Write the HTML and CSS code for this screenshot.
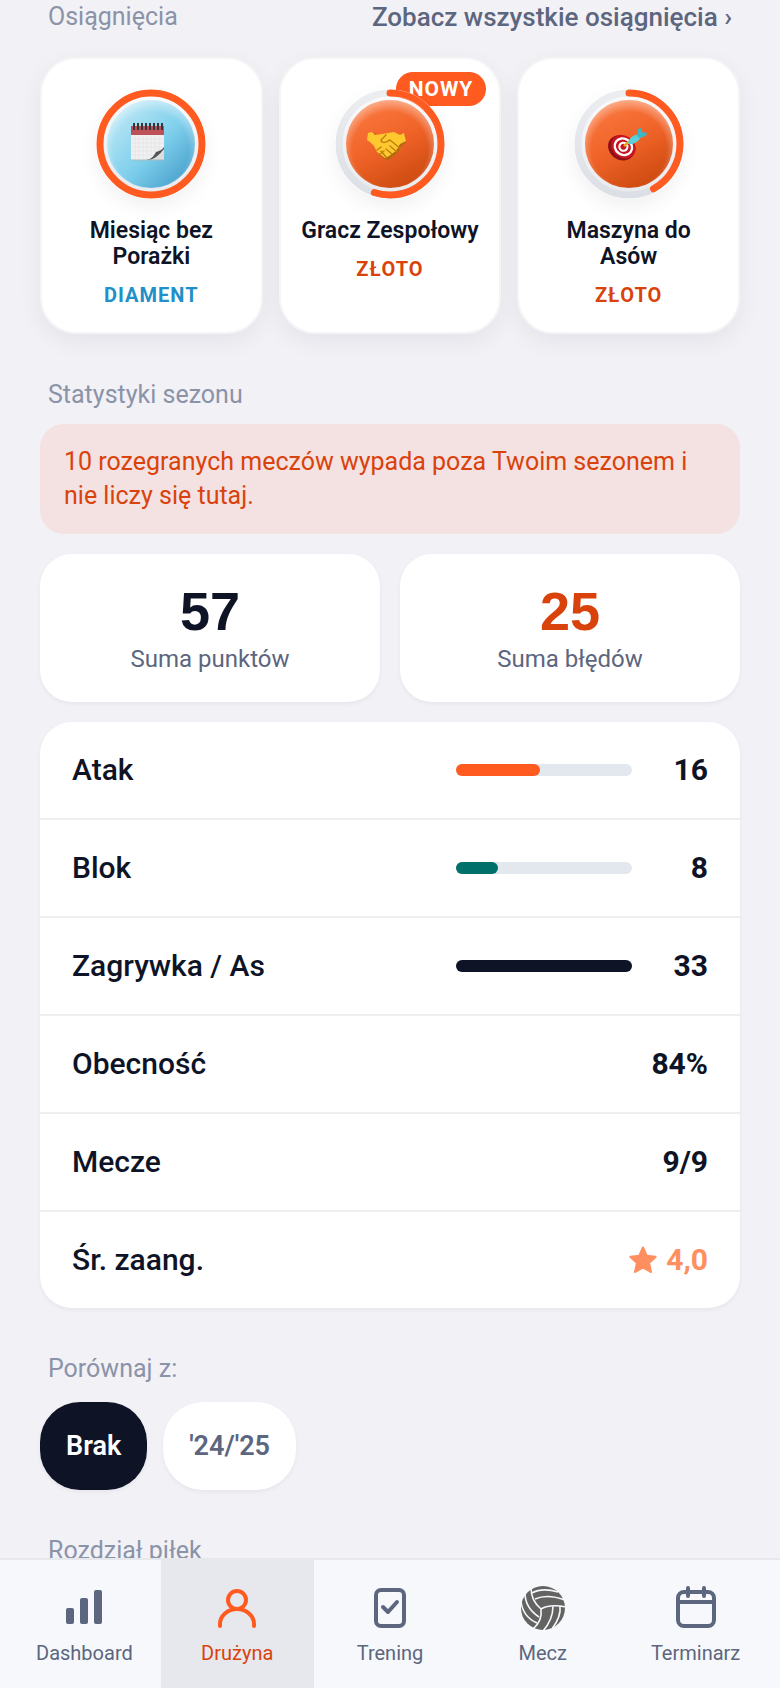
FILE: index.html
```
<!DOCTYPE html>
<html lang="pl">
<head>
    <meta charset="UTF-8">
    <meta name="viewport" content="width=device-width, initial-scale=1.0">
    <title>Drużyna</title>
    <link rel="stylesheet" href="styles.css">
</head>
<body>
    <main class="content">
        <!-- Achievements -->
        <div class="section-head">
            <h2 class="section-title">Osiągnięcia</h2>
            <a class="see-all" href="#">Zobacz wszystkie osiągnięcia ›</a>
        </div>
        <div class="achievements">
            <article class="achievement">
                <svg class="medal" viewBox="0 0 110 110" aria-hidden="true">
                    <defs>
                        <linearGradient id="diamond" x1="0" y1="0" x2="1" y2="1">
                            <stop offset="0" stop-color="#d9f1f9"/>
                            <stop offset="0.2" stop-color="#b0e3f3"/>
                            <stop offset="0.55" stop-color="#7ecfec"/>
                            <stop offset="1" stop-color="#3a93c2"/>
                        </linearGradient>
                        <linearGradient id="gold" x1="0.2" y1="0" x2="0.7" y2="1">
                            <stop offset="0" stop-color="#fb7a42"/>
                            <stop offset="0.5" stop-color="#f06328"/>
                            <stop offset="1" stop-color="#cc4a10"/>
                        </linearGradient>
                        <radialGradient id="shine" cx="0.5" cy="0.56" r="0.56">
                            <stop offset="0.76" stop-color="#fff" stop-opacity="0"/>
                            <stop offset="1" stop-color="#fff" stop-opacity="0.4"/>
                        </radialGradient>
                        <linearGradient id="track" x1="0" y1="0" x2="0" y2="1">
                            <stop offset="0" stop-color="#ebedf1"/>
                            <stop offset="1" stop-color="#dcdfe5"/>
                        </linearGradient>
                        <linearGradient id="rim" x1="0" y1="0" x2="0" y2="1">
                            <stop offset="0" stop-color="#fafafb"/>
                            <stop offset="1" stop-color="#e9eaee"/>
                        </linearGradient>
                    </defs>
                    <circle cx="55" cy="55" r="51" fill="url(#rim)" stroke="#ff5a1f" stroke-width="7"/>
                    <circle cx="55" cy="55" r="44" fill="url(#diamond)"/>
                    <circle cx="55" cy="55" r="44" fill="url(#shine)"/>
                    <g>
                        <path d="M35 39h33v32H35z" fill="#f1f1f2"/>
                        <path d="M35 37h33v9H35z" fill="#bd5158"/>
                        <path d="M39 46v25M43 46v25M47 46v25M51 46v25M55 46v25M59 46v20M63 46v16M35 50h33M35 54h33M35 58h33M35 62h28M35 66h24" stroke="#e6e6e9" stroke-width="1"/>
                        <path d="M50 71c7-1 8-5 10-8 3-1 6-2 8-5v4c-4 3-8 8-12 9z" fill="#555"/>
                        <path d="M53 71c6-1 11-6 15-11v11z" fill="#dedede"/>
                        <path d="M38 34v7M42 34v7M46 34v7M50 34v7M54 34v7M58 34v7M62 34v7M66 34v7" stroke="#3c3337" stroke-width="2"/>
                        <path d="M35 71h33" stroke="#a9b7bf" stroke-width="1"/>
                    </g>
                </svg>
                <h3 class="achievement-name">Miesiąc bez Porażki</h3>
                <p class="tier tier-diamond">Diament</p>
            </article>
            <article class="achievement">
                <span class="badge">Nowy</span>
                <svg class="medal" viewBox="0 0 110 110" aria-hidden="true">
                    <circle cx="55" cy="55" r="51" fill="url(#rim)" stroke="url(#track)" stroke-width="7"/>
                    <circle cx="55" cy="55" r="51" fill="none" stroke="#ff5a1f" stroke-width="7" stroke-linecap="round" pathLength="100" stroke-dasharray="55 100" transform="rotate(-90 55 55)"/>
                    <path d="M64 1a55 55 0 0 1 31 17M64 8a48 48 0 0 1 25 13" fill="none" stroke="#ff9a70" stroke-width="0.6"/>
                    <circle cx="55" cy="55" r="44" fill="url(#gold)"/>
                    <circle cx="55" cy="55" r="44" fill="url(#shine)"/>
                    <g stroke-linejoin="round" stroke-linecap="round">
                        <path d="M34 44l5-1 3 3 6-1 6 1 5-3 6 4 3-3 2 1 1 8-5 3-3 6-3 3-3 2-4 3-3-1-4-3-4-4-1-4-3-4-3-3z" fill="#b36a0c" transform="translate(0 1)"/>
                        <path d="M33 44l4-1 3 3 7-1 6-1 6-1 6 3 4-2 2 8-6 3-4 7-3 2-4 3-4 2-4-3-4-3-3-6-4-4-3-2z" fill="#fdc92f"/>
                        <path d="M51 46l-5 5c0 3 4 3 7 1l2-1 11 9M55 57l7 6M51 60l6 5M46 62l5 6M42 61l4-3M45 65l4-3" fill="none" stroke="#c27c10" stroke-width="1.4"/>
                    </g>
                </svg>
                <h3 class="achievement-name">Gracz Zespołowy</h3>
                <p class="tier tier-gold">Złoto</p>
            </article>
            <article class="achievement">
                <svg class="medal" viewBox="0 0 110 110" aria-hidden="true">
                    <circle cx="55" cy="55" r="51" fill="url(#rim)" stroke="url(#track)" stroke-width="7"/>
                    <circle cx="55" cy="55" r="51" fill="none" stroke="#ff5a1f" stroke-width="7" stroke-linecap="round" pathLength="100" stroke-dasharray="42 100" transform="rotate(-90 55 55)"/>
                    <circle cx="55" cy="55" r="44" fill="url(#gold)"/>
                    <circle cx="55" cy="55" r="44" fill="url(#shine)"/>
                    <g transform="rotate(35 48 58)">
                        <ellipse cx="48" cy="59" rx="14" ry="12" fill="#8d1018"/>
                        <ellipse cx="49" cy="57" rx="13" ry="11" fill="#c9141f"/>
                        <ellipse cx="49" cy="57" rx="9" ry="8" fill="none" stroke="#fff" stroke-width="2.4"/>
                        <ellipse cx="49" cy="57" rx="4" ry="4" fill="#c9141f" stroke="#fff" stroke-width="2.2"/>
                    </g>
                    <path d="M50 57l6-5" stroke="#e5a820" stroke-width="2.6"/>
                    <path d="M54 54c1-5 5-8 11-9l2 3c-3 5-8 8-12 7z" fill="#5ad0da"/>
                    <path d="M63 47l1-7 3-1 1 4 5 1-1 3-7 2z" fill="#3fb6c4"/>
                </svg>
                <h3 class="achievement-name">Maszyna do Asów</h3>
                <p class="tier tier-gold">Złoto</p>
            </article>
        </div>

        <!-- Season statistics -->
        <h2 class="section-title">Statystyki sezonu</h2>
        <p class="notice">10 rozegranych meczów wypada poza Twoim sezonem i nie liczy się tutaj.</p>
        <div class="totals">
            <div class="total">
                <strong class="total-value">57</strong>
                <span class="total-label">Suma punktów</span>
            </div>
            <div class="total">
                <strong class="total-value total-errors">25</strong>
                <span class="total-label">Suma błędów</span>
            </div>
        </div>
        <dl class="stats">
            <div class="stat">
                <dt>Atak</dt>
                <dd><span class="bar"><span class="bar-fill attack" style="width: 48%"></span></span><span class="count">16</span></dd>
            </div>
            <div class="stat">
                <dt>Blok</dt>
                <dd><span class="bar"><span class="bar-fill block" style="width: 24%"></span></span><span class="count">8</span></dd>
            </div>
            <div class="stat">
                <dt>Zagrywka / As</dt>
                <dd><span class="bar"><span class="bar-fill serve" style="width: 100%"></span></span><span class="count">33</span></dd>
            </div>
            <div class="stat">
                <dt>Obecność</dt>
                <dd>84%</dd>
            </div>
            <div class="stat">
                <dt>Mecze</dt>
                <dd>9/9</dd>
            </div>
            <div class="stat">
                <dt>Śr. zaang.</dt>
                <dd class="rating">
                    <svg class="star" viewBox="0 0 28 28" aria-hidden="true"><path d="M14 2.500l3.400 7.700 8.200.9-6.100 5.600 1.800 8.300-7.300-4.300-7.300 4.300 1.800-8.300-6.100-5.600 8.200-.9z" fill="currentColor" stroke="currentColor" stroke-width="2.200" stroke-linejoin="round"/></svg>
                    4,0
                </dd>
            </div>
        </dl>

        <!-- Season comparison -->
        <h2 class="section-title">Porównaj z:</h2>
        <div class="seasons">
            <button class="pill pill-active" type="button">Brak</button>
            <button class="pill" type="button">'24/'25</button>
        </div>
        <h2 class="section-title">Rozdział piłek</h2>
    </main>

    <nav class="tabbar">
        <a class="tab" href="#">
            <svg class="tab-icon" viewBox="0 0 48 48" fill="currentColor" aria-hidden="true"><rect x="6" y="24" width="8" height="16" rx="2"/><rect x="20" y="14" width="8" height="26" rx="2"/><rect x="34" y="6" width="8" height="34" rx="2"/></svg>
            Dashboard
        </a>
        <a class="tab tab-active" href="#" aria-current="page">
            <svg class="tab-icon" viewBox="0 0 48 48" fill="none" stroke="currentColor" stroke-width="4" stroke-linecap="round" aria-hidden="true"><circle cx="24" cy="16" r="9"/><path d="M7 42v-2a17 15 0 0 1 34 0v2"/></svg>
            Drużyna
        </a>
        <a class="tab" href="#">
            <svg class="tab-icon" viewBox="0 0 48 48" fill="none" stroke="currentColor" stroke-width="4" stroke-linecap="round" stroke-linejoin="round" aria-hidden="true"><rect x="10" y="6" width="28" height="36" rx="5"/><path d="M17 23l5 5 9-10"/></svg>
            Trening
        </a>
        <a class="tab" href="#">
            <svg class="tab-icon" viewBox="0 0 48 48" fill="none" stroke="#f6f8fc" stroke-width="1.600" aria-hidden="true"><circle cx="24" cy="24" r="22" fill="#636462" stroke="none"/><path d="M22 25C16 20 12 13 12 4M22 25c7-4 15-4 25-2M22 25c1 8-2 15-8 20M6 9c0 9 5 18 14 24M2 17c1 10 7 18 16 22M13 9c7-4 16-4 26-1M16 15c9-4 19-3 30 1M34 22c0 9-3 17-10 25M41 22c1 8-2 15-8 23"/></svg>
            Mecz
        </a>
        <a class="tab" href="#">
            <svg class="tab-icon" viewBox="0 0 48 48" fill="none" stroke="currentColor" stroke-width="4" stroke-linecap="round" aria-hidden="true"><rect x="6" y="8" width="36" height="34" rx="6"/><path d="M6 18h36M16 4v8M32 4v8"/></svg>
            Terminarz
        </a>
    </nav>
</body>
</html>
```

FILE: styles.css
```
* {
    box-sizing: border-box;
}
body {
    margin: 0;
    height: 100vh;
    display: flex;
    flex-direction: column;
    background: #f2f1f6;
    color: #0e1326;
    font-family: Roboto, "Liberation Sans", sans-serif;
    font-size: 25px;
}
h2, h3, p, dl, dd {
    margin: 0;
}
a {
    text-decoration: none;
}
.content {
    flex: 1;
    min-height: 0;
    overflow-y: auto;
    scrollbar-width: none;
    padding: 0 40px;
}
.section-head {
    display: flex;
    justify-content: space-between;
    padding-right: 8px;
}
.section-title, .see-all {
    line-height: 34px;
}
.section-title {
    padding-left: 8px;
    font-size: 25px;
    font-weight: 400;
    color: #8a93a8;
}
.see-all {
    font-size: 26px;
    font-weight: 500;
    color: #5c667e;
}

/* achievements */
.achievements {
    display: grid;
    grid-template-columns: repeat(3, 1fr);
    gap: 16px;
    margin: 23px 0 44px;
}
.achievement {
    position: relative;
    padding: 30px 16px 24px;
    border: 2px solid #f5f5f6;
    border-radius: 36px;
    background: #fff;
    box-shadow: 0 8px 24px rgba(14, 19, 38, 0.06);
    text-align: center;
}
.medal {
    display: block;
    width: 110px;
    height: 110px;
    margin: 0 auto 19px;
    position: relative;
    border-radius: 50%;
    box-shadow: 0 8px 20px rgba(14, 19, 38, 0.06);
}
.badge {
    position: absolute;
    top: 13px;
    right: 13px;
    padding: 0 13px;
    border-radius: 17px;
    background: #ff5a1f;
    color: #fff;
    font-size: 21px;
    font-weight: 700;
    line-height: 34px;
    letter-spacing: 1px;
    text-transform: uppercase;
}
.achievement-name {
    font-size: 23px;
    font-weight: 600;
    line-height: 26px;
}
.tier {
    margin-top: 12px;
    font-size: 20px;
    font-weight: 700;
    line-height: 26px;
    letter-spacing: 1px;
    text-transform: uppercase;
}
.tier-diamond {
    color: #2190c8;
}
.tier-gold {
    color: #d9430b;
}

/* season statistics */
.notice {
    margin: 12px 0 20px;
    padding: 21px 24px;
    border-radius: 24px;
    background: #f4e1e1;
    color: #d9430b;
    line-height: 34px;
}
.totals {
    display: grid;
    grid-template-columns: 1fr 1fr;
    gap: 20px;
    margin-bottom: 20px;
}
.total {
    display: flex;
    flex-direction: column;
    align-items: center;
    padding: 26px 16px;
    border-radius: 32px;
    background: #fff;
    box-shadow: 0 2px 4px rgba(14, 19, 38, 0.05);
}
.total-value {
    font-family: "Liberation Sans", Arial, sans-serif;
    font-size: 54px;
    line-height: 62px;
}
.total-errors {
    color: #d9430b;
}
.total-label {
    font-size: 24px;
    line-height: 34px;
    color: #5c667e;
}
.stats {
    margin-bottom: 44px;
    border-radius: 32px;
    background: #fff;
    box-shadow: 0 2px 4px rgba(14, 19, 38, 0.05);
    font-size: 30px;
}
.stat {
    display: flex;
    align-items: center;
    justify-content: space-between;
    padding: 28px 32px;
    line-height: 40px;
}
.stat + .stat {
    border-top: 2px solid #eeeeef;
}
.stat dt {
    font-weight: 500;
}
.stat dd {
    display: flex;
    align-items: center;
    font-weight: 700;
}
.bar {
    width: 176px;
    height: 12px;
    border-radius: 6px;
    background: #e3e7ee;
}
.bar-fill {
    display: block;
    height: 12px;
    border-radius: 6px;
}
.attack {
    background: #ff5a1f;
}
.block {
    background: #00706a;
}
.serve {
    background: #0e1326;
}
.count {
    width: 76px;
    text-align: right;
}
.stat .rating {
    gap: 8px;
    color: #ff8f5e;
}
.star {
    width: 30px;
    height: 30px;
}

/* season comparison */
.seasons {
    display: flex;
    gap: 16px;
    margin: 16px 0 44px;
}
.pill {
    height: 88px;
    padding: 0 26px;
    border: 0;
    border-radius: 40px;
    background: #fff;
    color: #5c667e;
    box-shadow: 0 2px 4px rgba(14, 19, 38, 0.05);
    font-family: inherit;
    font-size: 27px;
    font-weight: 600;
}
.pill-active {
    background: #0e1326;
    color: #fff;
}

/* bottom navigation */
.tabbar {
    display: flex;
    padding: 0 8px;
    border-top: 2px solid #e7e8ed;
    background: #f6f8fc;
}
.tab {
    flex: 1;
    display: flex;
    flex-direction: column;
    align-items: center;
    gap: 8px;
    padding: 24px 0 22px;
    color: #5c667e;
    font-size: 20px;
    line-height: 26px;
}
.tab-active {
    background: #e7e8ed;
    color: #d9430b;
}
.tab-icon {
    width: 48px;
    height: 48px;
}
.tab-active .tab-icon {
    color: #ff5a1f;
}
```
